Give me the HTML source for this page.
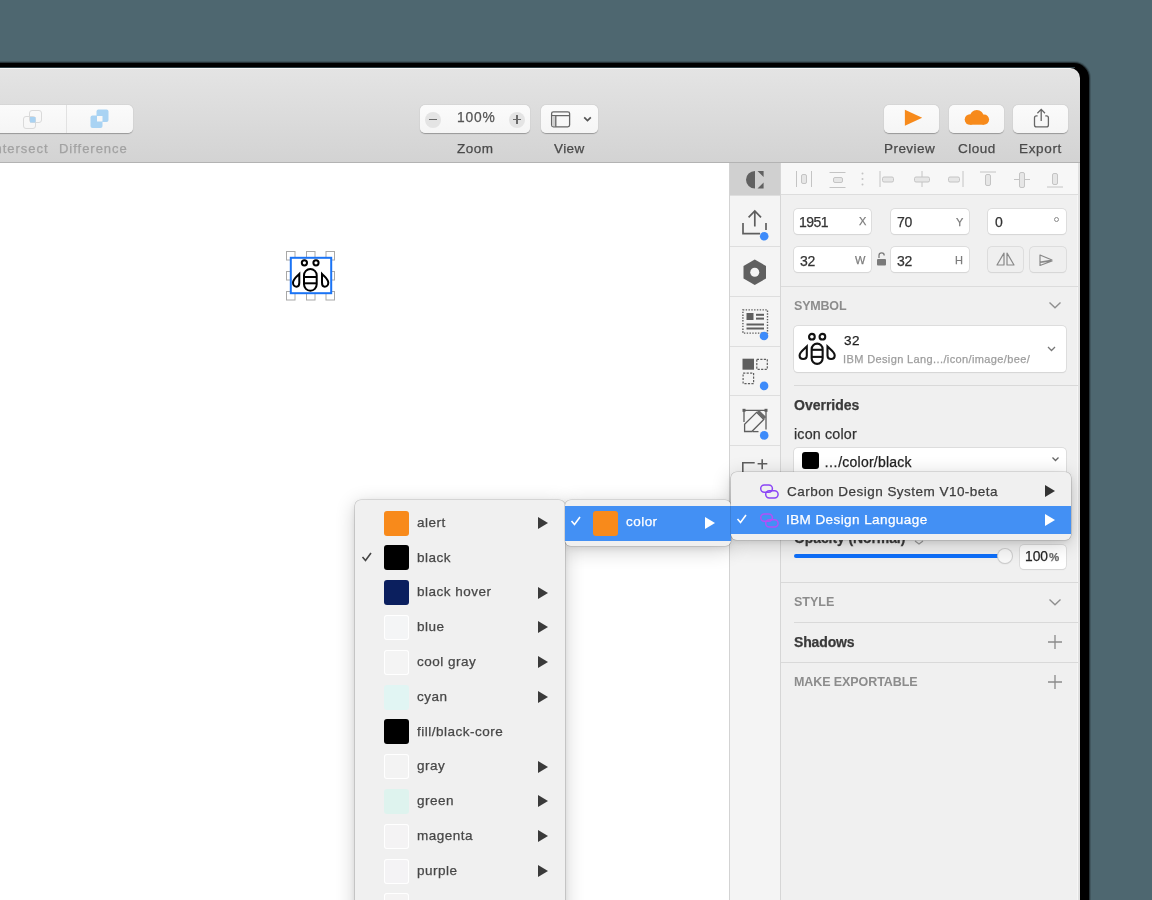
<!DOCTYPE html>
<html><head><meta charset="utf-8">
<style>
*{margin:0;padding:0;box-sizing:border-box}
html,body{width:1152px;height:900px;overflow:hidden;background:#4e6770;font-family:"Liberation Sans",sans-serif}
#frame{position:absolute;left:-30px;top:63px;width:1119px;height:900px;background:#000;border-top-right-radius:15px;box-shadow:0 0 0 1px rgba(0,0,0,.4),0 0 0 2px rgba(0,0,0,.15)}
#win{position:absolute;left:0;top:0;width:1080px;height:900px;overflow:hidden;clip-path:inset(68px 0 0 -40px round 0 10px 0 0)}
#toolbar{position:absolute;left:0;top:68px;width:1080px;height:95px;background:linear-gradient(#e4e4e4,#d3d3d3);border-top:1px solid #f8f8f8;border-bottom:1px solid #b3b3b3}
.btn{position:absolute;background:linear-gradient(#fbfbfb,#f5f5f5);border-radius:5px;box-shadow:0 0.6px 1px rgba(0,0,0,.3)}
#canvas{position:absolute;left:0;top:163px;width:729px;height:737px;background:#fff}
#side{position:absolute;left:729px;top:163px;width:52px;height:737px;background:#f4f4f4;border-left:1px solid #d3d3d3;border-right:1px solid #d6d6d6}
#insp{position:absolute;left:781px;top:163px;width:299px;height:737px;background:#f0f0f0;border-right:2px solid #e0e0e0;box-shadow:inset -3px 0 0 -2px #f7f7f7}
.t{position:absolute;white-space:nowrap;line-height:1;will-change:transform;-webkit-text-stroke:0.25px currentColor}
.sep{position:absolute;height:1px;background:#d6d6d6}
.fld{position:absolute;background:#fff;border-radius:4px;box-shadow:0 0 0 0.8px #d8d8d8, 0 0.5px 1px rgba(0,0,0,.12)}
.msh{position:absolute;border-radius:6px;box-shadow:0 4px 20px rgba(0,0,0,.2),0 2px 6px rgba(0,0,0,.08)}
.menu{position:absolute;background:#f0f0f0;border-radius:6px;box-shadow:0 0 0 0.6px rgba(0,0,0,.2)}
.sw{position:absolute;width:25px;height:25px;border-radius:3px}
.arr{position:absolute;width:0;height:0;border-top:6px solid transparent;border-bottom:6px solid transparent;border-left:10px solid #333}

</style></head><body>
<div id="frame"></div>
<div style="position:absolute;left:0;top:67px;width:1075px;height:1px;background:#2f3f45"></div>
<div id="win">
<div id="toolbar"></div>
<div class="btn" style="left:-20px;top:105px;width:152.5px;height:27.5px"></div>
<div style="position:absolute;left:66px;top:105px;width:1px;height:27.5px;background:#e2e2e2"></div>
<svg style="position:absolute;left:0;top:100px" width="140" height="35">
    <rect x="23.5" y="16.5" width="12" height="12" rx="2.5" fill="none" stroke="#dadada"/>
    <rect x="29.5" y="10.5" width="12" height="12" rx="2.5" fill="none" stroke="#dadada"/>
    <rect x="30" y="17" width="5.5" height="5.5" fill="#a9d2f2"/>
    <rect x="90.5" y="15.5" width="12" height="12.5" rx="2" fill="#a9d3f3"/>
    <rect x="96.5" y="9.5" width="12" height="12.5" rx="2" fill="#a9d3f3"/>
    <rect x="97" y="16" width="5.5" height="5.5" fill="#f8f8f8"/>
  </svg>
<div class="t" style="left:-10.00px;top:141.90px;font-size:13px;color:#a2a2a2;letter-spacing:0.97px;">Intersect</div>
<div class="t" style="left:59.00px;top:141.90px;font-size:13px;color:#a2a2a2;letter-spacing:0.97px;">Difference</div>
<div class="btn" style="left:420px;top:105px;width:110px;height:27.5px"></div>
<div style="position:absolute;left:425px;top:111.5px;width:16px;height:16px;border-radius:50%;background:#e4e4e4"></div>
<div style="position:absolute;left:509px;top:111.5px;width:16px;height:16px;border-radius:50%;background:#e4e4e4"></div>
<div style="position:absolute;left:429px;top:119px;width:8px;height:1.3px;background:#6a6a6a"></div>
<div style="position:absolute;left:513px;top:119px;width:8px;height:1.3px;background:#6a6a6a"></div>
<div style="position:absolute;left:516.35px;top:115.3px;width:1.3px;height:8.4px;background:#6a6a6a"></div>
<div class="t" style="left:456.80px;top:110.92px;font-size:13.8px;color:#555;letter-spacing:0.79px;">100%</div>
<div class="t" style="left:457.00px;top:141.87px;font-size:13.5px;color:#4a4a4a;letter-spacing:0.51px;">Zoom</div>
<div class="btn" style="left:541px;top:105px;width:57px;height:27.5px"></div>
<svg style="position:absolute;left:541px;top:105px" width="57" height="28">
    <rect x="10.6" y="6.8" width="18" height="15" rx="1.8" fill="none" stroke="#666" stroke-width="1.3"/>
    <line x1="10.6" y1="10.6" x2="28.6" y2="10.6" stroke="#666" stroke-width="1.3"/>
    <rect x="11.2" y="11.2" width="3.6" height="10" fill="#cfcfcf"/>
    <line x1="14.8" y1="10.6" x2="14.8" y2="21.8" stroke="#666" stroke-width="1.3"/>
    <polyline points="43.2,12.4 46.5,15.6 49.8,12.4" fill="none" stroke="#555" stroke-width="1.7"/>
  </svg>
<div class="t" style="left:554.30px;top:141.87px;font-size:13.5px;color:#4a4a4a;letter-spacing:0.41px;">View</div>
<div class="btn" style="left:884px;top:105px;width:55px;height:27.5px"></div>
<div class="btn" style="left:948.8px;top:105px;width:55px;height:27.5px"></div>
<div class="btn" style="left:1013.4px;top:105px;width:55px;height:27.5px"></div>
<svg style="position:absolute;left:884px;top:105px" width="55" height="28"><polygon points="20.9,4.8 38.2,12.8 20.9,20.8" fill="#f78a1b"/></svg>
<svg style="position:absolute;left:948.8px;top:105px" width="55" height="28">
    <g fill="#f78a1b"><circle cx="27.8" cy="12" r="7"/><circle cx="20.9" cy="14.5" r="5.2"/><circle cx="35" cy="14.6" r="5.1"/><rect x="20.9" y="14.5" width="14.1" height="5.2"/></g>
  </svg>
<svg style="position:absolute;left:1013.4px;top:105px" width="55" height="28">
    <path d="M24.6,10.8 H23.5 Q21.5,10.8 21.5,12.8 V19.9 Q21.5,21.9 23.5,21.9 H33.4 Q35.4,21.9 35.4,19.9 V12.8 Q35.4,10.8 33.4,10.8 H32.3" fill="none" stroke="#666" stroke-width="1.3"/>
    <path d="M28.2,16 V4.6 M24.4,8.3 L28.2,4.4 L32,8.3" fill="none" stroke="#666" stroke-width="1.3"/>
  </svg>
<div class="t" style="left:884.00px;top:141.77px;font-size:13.5px;color:#4a4a4a;letter-spacing:0.44px;">Preview</div>
<div class="t" style="left:958.00px;top:141.77px;font-size:13.5px;color:#4a4a4a;letter-spacing:0.51px;">Cloud</div>
<div class="t" style="left:1019.00px;top:141.77px;font-size:13.5px;color:#4a4a4a;letter-spacing:0.67px;">Export</div>
<div id="canvas"></div>
<svg style="position:absolute;left:280px;top:245px" width="60" height="60">
    <g fill="#fff" stroke="#a8a8a8" stroke-width="1">
      <rect x="6.5" y="6.5" width="8.5" height="8.5"/><rect x="26.5" y="6.5" width="8.5" height="8.5"/><rect x="46" y="6.5" width="8.5" height="8.5"/>
      <rect x="6.5" y="26.5" width="8.5" height="8.5"/><rect x="46" y="26.5" width="8.5" height="8.5"/>
      <rect x="6.5" y="46.5" width="8.5" height="8.5"/><rect x="26.5" y="46.5" width="8.5" height="8.5"/><rect x="46" y="46.5" width="8.5" height="8.5"/>
    </g>
    <rect x="10.8" y="12.8" width="40.4" height="35.4" fill="#fff" stroke="#1a73f5" stroke-width="2"/>
    <g fill="none" stroke="#000" stroke-width="2">
      <circle cx="24.4" cy="17.8" r="2.6"/><circle cx="36" cy="17.8" r="2.6"/>
      <rect x="24" y="24" width="12.7" height="21.7" rx="6.35"/>
      <line x1="24" y1="32" x2="36.7" y2="32"/><line x1="24" y1="38.3" x2="36.7" y2="38.3"/>
      <path d="M19.3,29 C17,31.5 13,34 13,37.8 C13,40 14.6,41.7 16.6,41.7 C18.6,41.7 19.3,40 19.3,37.8 Z"/>
      <path d="M42,29 C44.3,31.5 48.3,34 48.3,37.8 C48.3,40 46.7,41.7 44.7,41.7 C42.7,41.7 42,40 42,37.8 Z"/>
    </g>
  </svg>
<div id="side"></div>
<div style="position:absolute;left:730px;top:163px;width:50px;height:32px;background:#d0d0d0"></div>
<div class="sep" style="left:730px;width:50px;top:195px;background:#dedede"></div>
<div class="sep" style="left:730px;width:50px;top:246px;background:#dedede"></div>
<div class="sep" style="left:730px;width:50px;top:296px;background:#dedede"></div>
<div class="sep" style="left:730px;width:50px;top:346px;background:#dedede"></div>
<div class="sep" style="left:730px;width:50px;top:395px;background:#dedede"></div>
<div class="sep" style="left:730px;width:50px;top:445px;background:#dedede"></div>
<svg style="position:absolute;left:730px;top:163px" width="50" height="320">
    <path d="M25,8 A9,8.8 0 0 0 25,25.6 Z" fill="#616161"/>
    <path d="M27.5,8 H33.6 V14 Z M27.5,25.6 H33.6 V19.4 Z" fill="#616161"/>
    <g fill="none" stroke="#5e5e5e" stroke-width="1.7">
      <path d="M24.8,47.5 V63.5 M18.6,54.4 L24.8,48 L31,54.4"/>
      <path d="M13,60 V70.6 H30 M36,60 V67"/>
    </g>
    <circle cx="34.2" cy="73.2" r="4.3" fill="#3d8bfa"/>
    <path d="M24.75,96.5 L36,103 V115.5 L24.75,122 L13.5,115.5 V103 Z" fill="#606060"/>
    <circle cx="24.75" cy="109.25" r="4.5" fill="#f4f4f4"/>
    <rect x="12.9" y="146.9" width="24.6" height="23.2" fill="none" stroke="#5e5e5e" stroke-width="1.4" stroke-dasharray="1.4 1.4"/>
    <rect x="16.5" y="150" width="7" height="7" fill="#5e5e5e"/>
    <rect x="26" y="150.8" width="8" height="2" fill="#5e5e5e"/><rect x="26" y="154.6" width="8" height="2" fill="#5e5e5e"/>
    <rect x="16.5" y="160.5" width="17.5" height="2" fill="#5e5e5e"/><rect x="16.5" y="164.5" width="17.5" height="2" fill="#5e5e5e"/>
    <circle cx="34" cy="173" r="4.3" fill="#3d8bfa"/>
    <rect x="12.5" y="195.7" width="11.5" height="11" fill="#5e5e5e"/>
    <rect x="26.8" y="196.3" width="10.5" height="10" fill="none" stroke="#5e5e5e" stroke-width="1.2" stroke-dasharray="2.2 1.3"/>
    <rect x="13.1" y="210.1" width="10.5" height="10.5" fill="none" stroke="#5e5e5e" stroke-width="1.2" stroke-dasharray="2.2 1.3"/>
    <circle cx="34.1" cy="222.9" r="4.3" fill="#3d8bfa"/>
    <g fill="none" stroke="#5e5e5e" stroke-width="1.3">
      <path d="M14,247.3 H36 M14,247.3 V259 M36,247.3 V266.5"/>
      <path d="M22.5,268.6 H28.5"/>
      <path d="M14.6,261.2 V268.5 H21.8 L33.8,256.5 L26.6,249.3 Z"/>
    </g>
    <rect x="12.5" y="245.8" width="3" height="3" fill="#5e5e5e"/><rect x="34.5" y="245.8" width="3" height="3" fill="#5e5e5e"/>
    <path d="M26.6,249.3 L33.8,256.5 L36.2,254.1 L29,246.9 Z" fill="#6a6a6a"/>
    <circle cx="34.2" cy="272.4" r="4.3" fill="#3d8bfa"/>
    <g fill="none" stroke="#5e5e5e" stroke-width="1.6">
      <path d="M12.8,310 V299.8 H24.7"/>
      <path d="M32.2,296.2 V306.3 M27.6,300.8 H37.3"/>
    </g>
  </svg>
<div id="insp"></div>
<div style="position:absolute;left:781px;top:163px;width:297px;height:32px;background:#f7f7f7"></div>
<div class="sep" style="left:781px;width:297px;top:194px;background:#dddddd"></div>
<svg style="position:absolute;left:781px;top:163px" width="297" height="32" fill="#e6e6e6" stroke="#c4c4c4" stroke-width="1">
    <line x1="15.5" y1="8" x2="15.5" y2="24"/><line x1="30.5" y1="8" x2="30.5" y2="24"/><rect x="20.5" y="11.5" width="5" height="9" rx="1.5"/>
    <line x1="48.5" y1="9.5" x2="64.5" y2="9.5"/><line x1="48.5" y1="24.5" x2="64.5" y2="24.5"/><rect x="52.5" y="14.5" width="9" height="5" rx="1.5"/>
    <circle cx="81.5" cy="10.5" r="1" fill="#c4c4c4" stroke="none"/><circle cx="81.5" cy="16" r="1" fill="#c4c4c4" stroke="none"/><circle cx="81.5" cy="21.5" r="1" fill="#c4c4c4" stroke="none"/>
    <line x1="99" y1="8" x2="99" y2="24"/><rect x="101.5" y="14" width="11" height="5" rx="1.5"/>
    <line x1="141" y1="8" x2="141" y2="24"/><rect x="133.5" y="14" width="15" height="5" rx="1.5"/>
    <line x1="182" y1="8" x2="182" y2="24"/><rect x="167.5" y="14" width="11" height="5" rx="1.5"/>
    <line x1="199" y1="9" x2="215" y2="9"/><rect x="204.5" y="11.5" width="5" height="11" rx="1.5"/>
    <line x1="233" y1="16.5" x2="249" y2="16.5"/><rect x="238.5" y="9.5" width="5" height="15" rx="1.5"/>
    <line x1="266" y1="24" x2="282" y2="24"/><rect x="271.5" y="10.5" width="5" height="11" rx="1.5"/>
  </svg>
<div class="fld" style="left:794px;top:208.5px;width:77px;height:25px"></div>
<div class="fld" style="left:891px;top:208.5px;width:77.5px;height:25px"></div>
<div class="fld" style="left:988px;top:208.5px;width:77.5px;height:25px"></div>
<div class="fld" style="left:794px;top:247px;width:77px;height:25px"></div>
<div class="fld" style="left:891px;top:247px;width:77.5px;height:25px"></div>
<div class="fld" style="left:988px;top:247px;width:35px;height:25px;background:#efefef"></div>
<div class="fld" style="left:1030px;top:247px;width:35.5px;height:25px;background:#efefef"></div>
<div class="t" style="left:798.90px;top:215.15px;font-size:14px;color:#333;letter-spacing:-0.50px;">1951</div>
<div class="t" style="left:897.40px;top:215.15px;font-size:14px;color:#333;letter-spacing:-0.30px;">70</div>
<div class="t" style="left:994.60px;top:215.15px;font-size:14px;color:#333;">0</div>
<div class="t" style="left:800.00px;top:253.75px;font-size:14px;color:#333;letter-spacing:-0.20px;">32</div>
<div class="t" style="left:897.40px;top:253.75px;font-size:14px;color:#333;letter-spacing:-0.20px;">32</div>
<div class="t" style="left:858.50px;top:216.29px;font-size:11px;color:#7c7c7c;">X</div>
<div class="t" style="left:956.40px;top:216.59px;font-size:11px;color:#7c7c7c;">Y</div>
<div style="position:absolute;left:1054.3px;top:216.9px;width:5px;height:5px;border-radius:50%;border:1.2px solid #8a8a8a"></div>
<div class="t" style="left:855.00px;top:255.09px;font-size:11px;color:#7c7c7c;">W</div>
<div class="t" style="left:954.70px;top:255.09px;font-size:11px;color:#7c7c7c;">H</div>
<svg style="position:absolute;left:875px;top:251px" width="14" height="16">
    <path d="M4,7 V4.5 A2.6,2.6 0 0 1 9.2,4.5" fill="none" stroke="#7a7a7a" stroke-width="1.3"/>
    <rect x="2" y="8" width="9" height="6.5" rx="1" fill="#7a7a7a"/>
  </svg>
<svg style="position:absolute;left:988px;top:247px" width="78" height="26">
    <path d="M16,18 L16,6 L9,18 Z M19,18 L19,6 L26,18 Z" fill="none" stroke="#888" stroke-width="1.2" stroke-linejoin="round"/>
    <path d="M52,8 L52,15 L64,13 Z M52,18.5 L52,15.5 L64,14 Z" fill="none" stroke="#888" stroke-width="1.2" stroke-linejoin="round"/>
  </svg>
<div class="sep" style="left:781px;width:297px;top:286px;background:#dcdcdc"></div>
<div class="t" style="left:794.00px;top:300.02px;font-size:12.5px;font-weight:bold;color:#8c8c8c;letter-spacing:-0.19px;-webkit-text-stroke:0;">SYMBOL</div>
<svg style="position:absolute;left:1045px;top:298px" width="20" height="14"><polyline points="4.5,4.5 10,9.8 15.5,4.5" fill="none" stroke="#8f8f8f" stroke-width="1.4"/></svg>
<div class="fld" style="left:794px;top:326px;width:272px;height:46px"></div>
<svg style="position:absolute;left:796px;top:330px" width="42" height="38">
    <g fill="none" stroke="#111" stroke-width="2.1">
      <circle cx="15.9" cy="6.7" r="2.85"/><circle cx="26.4" cy="6.7" r="2.85"/>
      <rect x="15.65" y="13.65" width="11" height="20.2" rx="5.5"/>
      <line x1="15.65" y1="19.8" x2="26.65" y2="19.8"/><line x1="15.65" y1="26.9" x2="26.65" y2="26.9"/>
      <path d="M10.8,16.6 C8.5,19 3.6,22 3.6,25.5 C3.6,27.6 5.2,29 7.2,29 C9.4,29 10.8,27.5 10.8,25.5 Z"/>
      <path d="M31.5,16.6 C33.8,19 38.7,22 38.7,25.5 C38.7,27.6 37.1,29 35.1,29 C32.9,29 31.5,27.5 31.5,25.5 Z"/>
    </g>
  </svg>
<div class="t" style="left:843.80px;top:333.87px;font-size:13.5px;color:#222;letter-spacing:0.60px;">32</div>
<div class="t" style="left:842.80px;top:353.69px;font-size:11px;color:#9d9d9d;letter-spacing:0.38px;">IBM Design Lang.../icon/image/bee/</div>
<svg style="position:absolute;left:1045px;top:344px" width="14" height="10"><polyline points="3,3 6.5,6.5 10,3" fill="none" stroke="#777" stroke-width="1.3"/></svg>
<div class="sep" style="left:794px;width:284px;top:385px;background:#d9d9d9"></div>
<div class="t" style="left:793.80px;top:398.05px;font-size:14px;font-weight:bold;color:#3a3a3a;">Overrides</div>
<div class="t" style="left:794.00px;top:426.65px;font-size:14.3px;color:#333;letter-spacing:0.17px;">icon color</div>
<div class="fld" style="left:794px;top:448px;width:272px;height:27px"></div>
<div style="position:absolute;left:802px;top:452px;width:17px;height:17px;border-radius:3px;background:#000"></div>
<div class="t" style="left:823.80px;top:454.65px;font-size:14px;color:#222;letter-spacing:0.22px;">…/color/black</div>
<svg style="position:absolute;left:1050px;top:455px" width="12" height="10"><polyline points="2.5,2.5 5.5,5.5 8.5,2.5" fill="none" stroke="#666" stroke-width="1.3"/></svg>
<div class="t" style="left:793.60px;top:531.15px;font-size:14px;font-weight:bold;color:#3a3a3a;letter-spacing:-0.10px;">Opacity (Normal)</div>
<svg style="position:absolute;left:912px;top:532px" width="14" height="16"><path d="M3,4 L7,1 L11,4 M3,9 L7,12 L11,9" fill="none" stroke="#999" stroke-width="1.2"/></svg>
<div style="position:absolute;left:793.7px;top:554px;width:212px;height:4px;border-radius:2px;background:#0e6ffa"></div>
<div style="position:absolute;left:997.5px;top:549px;width:14px;height:14px;border-radius:50%;background:#f8f8f8;box-shadow:0 0 0 1px #cdcdcd,0 1px 1.5px rgba(0,0,0,.15)"></div>
<div class="fld" style="left:1020px;top:544.5px;width:45.5px;height:24px"></div>
<div class="t" style="left:1024.60px;top:550.02px;font-size:13.8px;color:#262626;">100</div>
<div class="t" style="left:1048.50px;top:551.97px;font-size:11.5px;font-weight:bold;color:#6a6a6a;">%</div>
<div class="sep" style="left:781px;width:297px;top:582px;background:#d9d9d9"></div>
<div class="t" style="left:793.50px;top:596.22px;font-size:12.5px;font-weight:bold;color:#8c8c8c;-webkit-text-stroke:0;">STYLE</div>
<svg style="position:absolute;left:1045px;top:595px" width="20" height="14"><polyline points="4.5,4.5 10,9.8 15.5,4.5" fill="none" stroke="#8f8f8f" stroke-width="1.4"/></svg>
<div class="sep" style="left:794px;width:284px;top:621.5px;background:#d9d9d9"></div>
<div class="t" style="left:793.50px;top:634.85px;font-size:14px;font-weight:bold;color:#3a3a3a;letter-spacing:-0.15px;">Shadows</div>
<svg style="position:absolute;left:1047px;top:634px" width="16" height="16"><path d="M8,1 V15 M1,8 H15" stroke="#8a8a8a" stroke-width="1.3"/></svg>
<div class="sep" style="left:781px;width:297px;top:662px;background:#d9d9d9"></div>
<div class="t" style="left:793.50px;top:675.67px;font-size:12.5px;font-weight:bold;color:#8c8c8c;letter-spacing:-0.09px;-webkit-text-stroke:0;">MAKE EXPORTABLE</div>
<svg style="position:absolute;left:1047px;top:674px" width="16" height="16"><path d="M8,1 V15 M1,8 H15" stroke="#8a8a8a" stroke-width="1.3"/></svg>
<div class="msh" style="left:355px;top:500px;width:210px;height:460px"></div>
<div class="msh" style="left:565px;top:500px;width:166px;height:46px"></div>
<div class="msh" style="left:731px;top:472px;width:340px;height:67.5px"></div>
<div class="menu" style="left:355px;top:500px;width:210px;height:460px"></div>
<div class="sw" style="left:384px;top:510.5px;background:#f88a1b;"></div>
<div class="t" style="left:416.70px;top:515.77px;font-size:13.5px;color:#474747;letter-spacing:0.50px;">alert</div>
<div class="arr" style="left:538.3px;top:517.0px;border-left-color:#3a3a3a"></div>
<div class="sw" style="left:384px;top:545.3px;background:#000;"></div>
<div class="t" style="left:416.70px;top:550.57px;font-size:13.5px;color:#474747;letter-spacing:0.50px;">black</div>
<svg style="position:absolute;left:360px;top:550.8px" width="14" height="12"><polyline points="2.5,6 5.5,9.5 11,2" fill="none" stroke="#444" stroke-width="1.6"/></svg>
<div class="sw" style="left:384px;top:580.1px;background:#0b1f5e;"></div>
<div class="t" style="left:416.70px;top:585.37px;font-size:13.5px;color:#474747;letter-spacing:0.50px;">black hover</div>
<div class="arr" style="left:538.3px;top:586.6px;border-left-color:#3a3a3a"></div>
<div class="sw" style="left:384px;top:614.9px;background:#f4f5f6;box-shadow:inset 0 0 0 1px #fff;"></div>
<div class="t" style="left:416.70px;top:620.17px;font-size:13.5px;color:#474747;letter-spacing:0.50px;">blue</div>
<div class="arr" style="left:538.3px;top:621.4px;border-left-color:#3a3a3a"></div>
<div class="sw" style="left:384px;top:649.7px;background:#f4f4f4;box-shadow:inset 0 0 0 1px #fff;"></div>
<div class="t" style="left:416.70px;top:654.97px;font-size:13.5px;color:#474747;letter-spacing:0.50px;">cool gray</div>
<div class="arr" style="left:538.3px;top:656.2px;border-left-color:#3a3a3a"></div>
<div class="sw" style="left:384px;top:684.5px;background:#e1f5f3;"></div>
<div class="t" style="left:416.70px;top:689.77px;font-size:13.5px;color:#474747;letter-spacing:0.50px;">cyan</div>
<div class="arr" style="left:538.3px;top:691.0px;border-left-color:#3a3a3a"></div>
<div class="sw" style="left:384px;top:719.3px;background:#000;"></div>
<div class="t" style="left:416.70px;top:724.57px;font-size:13.5px;color:#474747;letter-spacing:0.50px;">fill/black-core</div>
<div class="sw" style="left:384px;top:754.1px;background:#f3f3f3;box-shadow:inset 0 0 0 1px #fff;"></div>
<div class="t" style="left:416.70px;top:759.37px;font-size:13.5px;color:#474747;letter-spacing:0.50px;">gray</div>
<div class="arr" style="left:538.3px;top:760.6px;border-left-color:#3a3a3a"></div>
<div class="sw" style="left:384px;top:788.9px;background:#def3ee;"></div>
<div class="t" style="left:416.70px;top:794.17px;font-size:13.5px;color:#474747;letter-spacing:0.50px;">green</div>
<div class="arr" style="left:538.3px;top:795.4px;border-left-color:#3a3a3a"></div>
<div class="sw" style="left:384px;top:823.7px;background:#f4f3f4;box-shadow:inset 0 0 0 1px #fff;"></div>
<div class="t" style="left:416.70px;top:828.97px;font-size:13.5px;color:#474747;letter-spacing:0.50px;">magenta</div>
<div class="arr" style="left:538.3px;top:830.2px;border-left-color:#3a3a3a"></div>
<div class="sw" style="left:384px;top:858.5px;background:#f4f3f5;box-shadow:inset 0 0 0 1px #fff;"></div>
<div class="t" style="left:416.70px;top:863.77px;font-size:13.5px;color:#474747;letter-spacing:0.50px;">purple</div>
<div class="arr" style="left:538.3px;top:865.0px;border-left-color:#3a3a3a"></div>
<div class="sw" style="left:384px;top:893.3px;background:#f4f3f3;box-shadow:inset 0 0 0 1px #fff;"></div>
<div class="t" style="left:416.70px;top:898.57px;font-size:13.5px;color:#474747;letter-spacing:0.50px;">red</div>
<div class="arr" style="left:538.3px;top:899.8px;border-left-color:#3a3a3a"></div>
<div class="menu" style="left:565px;top:500px;width:166px;height:46px"></div>
<div style="position:absolute;left:565px;top:506px;width:166px;height:34.5px;background:#4390f4"></div>
<svg style="position:absolute;left:569px;top:515px" width="14" height="12"><polyline points="2.5,6 5.5,9.5 11,2" fill="none" stroke="#fff" stroke-width="1.6"/></svg>
<div class="sw" style="left:593px;top:511px;background:#f88a1b"></div>
<div class="t" style="left:625.80px;top:515.07px;font-size:13.5px;color:#fff;letter-spacing:0.46px;">color</div>
<div class="arr" style="left:705px;top:517.3px;border-left-color:#fff"></div>
<div class="menu" style="left:731px;top:472px;width:340px;height:67.5px"></div>
<div style="position:absolute;left:731px;top:506px;width:340px;height:28px;background:#4390f4"></div>
<svg style="position:absolute;left:758px;top:482px" width="24" height="18"><g fill="none" stroke="#8b45f5" stroke-width="1.5"><rect x="2.7" y="3" width="11.7" height="7.2" rx="3.6"/><rect x="7.7" y="8.7" width="12.4" height="7.2" rx="3.6"/></g></svg>
<svg style="position:absolute;left:758px;top:511px" width="24" height="18"><g fill="none" stroke="#b34ff7" stroke-width="1.5"><rect x="2.7" y="3" width="11.7" height="7.2" rx="3.6"/><rect x="7.7" y="8.7" width="12.4" height="7.2" rx="3.6"/></g></svg>
<div class="t" style="left:787.00px;top:484.57px;font-size:13.5px;color:#3d3d3d;letter-spacing:0.47px;">Carbon Design System V10-beta</div>
<div class="t" style="left:786.00px;top:512.87px;font-size:13.5px;color:#fff;letter-spacing:0.42px;">IBM Design Language</div>
<svg style="position:absolute;left:735px;top:513px" width="14" height="12"><polyline points="2.5,6 5.5,9.5 11,2" fill="none" stroke="#fff" stroke-width="1.6"/></svg>
<div class="arr" style="left:1044.6px;top:485px;border-left-color:#333"></div>
<div class="arr" style="left:1044.6px;top:514px;border-left-color:#fff"></div>
</div>
</body></html>
